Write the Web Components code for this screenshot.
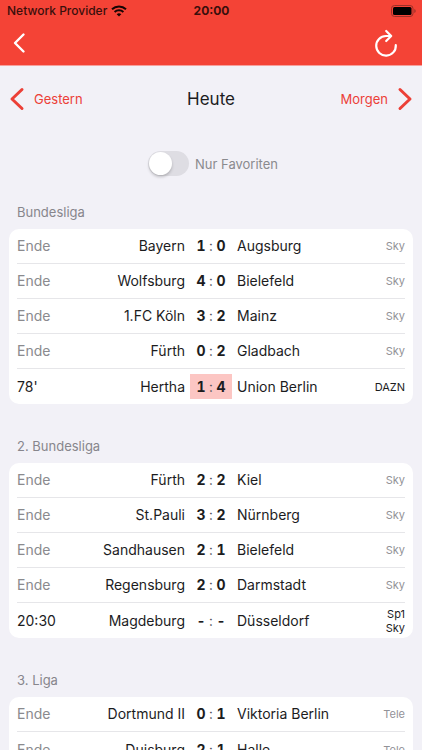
<!DOCTYPE html>
<html lang="de">
<head>
<meta charset="utf-8">
<meta name="viewport" content="width=device-width, initial-scale=1">
<title>Heute</title>
<style>
  body { margin: 0; background: #f2f1f7; font-family: Inter, "Liberation Sans", sans-serif; color: #1c1c1e; }
</style>
</head>
<body>
<score-app>
  <app-header slot="header"></app-header>
  <day-nav previous="Gestern" next="Morgen">Heute</day-nav>
  <favorite-switch>Nur Favoriten</favorite-switch>
  <league-table league="bl1">Bundesliga</league-table>
  <league-table league="bl2">2. Bundesliga</league-table>
  <league-table league="bl3">3. Liga</league-table>
</score-app>

<script>
const MATCHES = {
  bl1: [
    ['Ende', 'Bayern', '1', '0', 'Augsburg', ['Sky']],
    ['Ende', 'Wolfsburg', '4', '0', 'Bielefeld', ['Sky']],
    ['Ende', '1.FC Köln', '3', '2', 'Mainz', ['Sky']],
    ['Ende', 'Fürth', '0', '2', 'Gladbach', ['Sky']],
    ["78'", 'Hertha', '1', '4', 'Union Berlin', ['DAZN'], 'live']
  ],
  bl2: [
    ['Ende', 'Fürth', '2', '2', 'Kiel', ['Sky']],
    ['Ende', 'St.Pauli', '3', '2', 'Nürnberg', ['Sky']],
    ['Ende', 'Sandhausen', '2', '1', 'Bielefeld', ['Sky']],
    ['Ende', 'Regensburg', '2', '0', 'Darmstadt', ['Sky']],
    ['20:30', 'Magdeburg', '-', '-', 'Düsseldorf', ['Sp1', 'Sky'], 'open']
  ],
  bl3: [
    ['Ende', 'Dortmund II', '0', '1', 'Viktoria Berlin', ['Tele']],
    ['Ende', 'Duisburg', '2', '1', 'Halle', ['Tele']]
  ]
};

class ShadowElement extends HTMLElement {
  connectedCallback() {
    if (!this.shadowRoot) this.attachShadow({ mode: 'open' }).innerHTML = this.render();
  }
}

customElements.define('score-app', class extends ShadowElement {
  render() {
    return `<style>
      :host { display: flex; flex-direction: column; height: 100vh; overflow: hidden; }
      main { flex: 1; min-height: 0; overflow-y: auto; scrollbar-width: none; }
    </style>
    <slot name="header"></slot>
    <main><slot></slot></main>`;
  }
});

customElements.define('app-header', class extends ShadowElement {
  render() {
    return `<style>
      :host { display: block; background: #f44336; border-bottom: 1px solid #f6a09c; }
      .status { display: grid; grid-template-columns: 1fr auto 1fr; align-items: center; height: 22px; padding: 0 6px 0 7px; color: #3a0f0c; font-size: 12px; line-height: 16px; }
      .carrier { display: flex; align-items: center; gap: 4px; font-weight: 500; }
      .time { font-weight: 700; }
      .battery { justify-self: end; }
      nav { display: flex; justify-content: space-between; align-items: center; box-sizing: border-box; height: 43px; padding: 0 20px 2px 7px; }
      button { display: grid; place-items: center; width: 32px; height: 40px; padding: 0; border: 0; background: none; color: #fff; }
      .back { width: 24px; }
      svg { display: block; }
    </style>
    <div class="status">
      <span class="carrier">Network Provider
        <svg width="16" height="12" viewBox="0 0 16 12" fill="none" stroke="#160403" stroke-width="2" aria-hidden="true"><path d="M1 4.2a10.2 10.2 0 0 1 14 0M3.6 7a6.4 6.4 0 0 1 8.8 0"/><path d="M5.7 9.2a3.4 3.4 0 0 1 4.6 0L8 11.5z" fill="#160403" stroke="none"/></svg>
      </span>
      <span class="time">20:00</span>
      <svg class="battery" width="25" height="12" viewBox="0 0 25 12" aria-hidden="true"><rect x=".5" y=".5" width="21.5" height="11" rx="3" fill="none" stroke="#9b3028"/><rect x="2" y="2" width="18.5" height="8" rx="1.5" fill="#000"/><path d="M23.3 4q1.4.6 1.4 2t-1.4 2z" fill="#9b3028"/></svg>
    </div>
    <nav>
      <button class="back" aria-label="Zurück"><svg width="14" height="22" viewBox="0 0 14 22" fill="none" stroke="currentColor" stroke-width="2.4" stroke-linecap="round" stroke-linejoin="round"><path d="M11.500 2.500 3 11l8.500 8.500"/></svg></button>
      <button aria-label="Aktualisieren"><svg width="24" height="28" viewBox="0 0 24 28" fill="none" stroke="currentColor" stroke-width="2.2" stroke-linecap="round" stroke-linejoin="round"><path d="M17 7H12A9.800 9.800 0 1 0 21.800 16.200M12.200 2 17.200 7 12.200 12"/></svg></button>
    </nav>`;
  }
});

customElements.define('day-nav', class extends ShadowElement {
  render() {
    return `<style>
      :host { display: grid; grid-template-columns: 1fr auto 1fr; align-items: center; height: 66px; padding: 0 9px; }
      h1 { margin: 0; font-size: 17px; line-height: 22px; font-weight: 400; }
      button { display: flex; align-items: center; gap: 9px; padding: 0; border: 0; background: none; color: #ec4037; font: inherit; font-size: 13px; line-height: 20px; }
      .next { justify-self: end; }
      svg { display: block; fill: none; stroke: currentColor; stroke-width: 3; stroke-linecap: round; stroke-linejoin: round; }
    </style>
    <button class="prev"><svg width="16" height="24" viewBox="0 0 16 24" aria-hidden="true"><path d="M13 2.500 3 12l10 9.500"/></svg>${this.getAttribute('previous')}</button>
    <h1><slot></slot></h1>
    <button class="next">${this.getAttribute('next')}<svg width="16" height="24" viewBox="0 0 16 24" aria-hidden="true"><path d="M3 2.500 13 12 3 21.500"/></svg></button>`;
  }
});

customElements.define('favorite-switch', class extends ShadowElement {
  render() {
    return `<style>
      :host { display: flex; justify-content: center; align-items: center; height: 63px; padding-left: 4px; font-size: 13px; line-height: 20px; }
      label { display: flex; align-items: center; gap: 6px; color: #8a8a8e; }
      input { appearance: none; display: flex; box-sizing: border-box; width: 41px; height: 25px; margin: 0; padding: 1px; border-radius: 13px; background: #dedde3; }
      input::before { content: ""; width: 23px; height: 23px; border-radius: 50%; background: #fff; box-shadow: 0 2px 3px #0003; }
      input:checked { justify-content: flex-end; background: #34c759; }
    </style>
    <label><input type="checkbox" role="switch"><slot></slot></label>`;
  }
});

customElements.define('league-table', class extends ShadowElement {
  render() {
    const rows = MATCHES[this.getAttribute('league')].map(([status, home, a, b, away, channels, state = 'done']) => `
      <tr class="${state}">
        <td class="status">${status}</td>
        <td class="home">${home}</td>
        <td class="result"><div class="score"><b>${a}</b><span>:</span><b>${b}</b></div></td>
        <td class="away">${away}</td>
        <td class="channel">${channels.map(c => `<div>${c}</div>`).join('')}</td>
      </tr>`).join('');
    return `<style>
      :host { display: block; margin: 0 9px 25px; }
      h2 { margin: 0; padding: 7px 8px; font-size: 13px; line-height: 20px; font-weight: 400; color: #87868c; }
      .card { padding: 0 8px; border-radius: 10px; background: #fff; }
      table { width: 100%; table-layout: fixed; border-spacing: 0; font-size: 14px; line-height: 20px; }
      td { box-sizing: border-box; height: 35px; padding: 0; border-bottom: 1px solid #e6e6e9; white-space: nowrap; vertical-align: middle; }
      tr:last-child td { border-bottom: 0; }
      .status, .channel { width: 48px; }
      .result { width: 42px; }
      .home { padding-right: 5px; text-align: right; }
      .away { padding-left: 5px; }
      .channel { text-align: right; font-size: 11px; line-height: 14px; }
      .done .status { color: #8a8a8e; }
      .done .channel { color: #929297; }
      .score { display: grid; grid-template-columns: 1fr 11px 1fr; align-items: center; height: 25px; font-variant-numeric: tabular-nums; }
      .score b:first-child { text-align: right; }
      .score span { text-align: center; color: #55555a; }
      .live .score { background: #fcc6c3; }
    </style>
    <h2><slot></slot></h2>
    <div class="card"><table>${rows}</table></div>`;
  }
});
</script>
</body>
</html>
